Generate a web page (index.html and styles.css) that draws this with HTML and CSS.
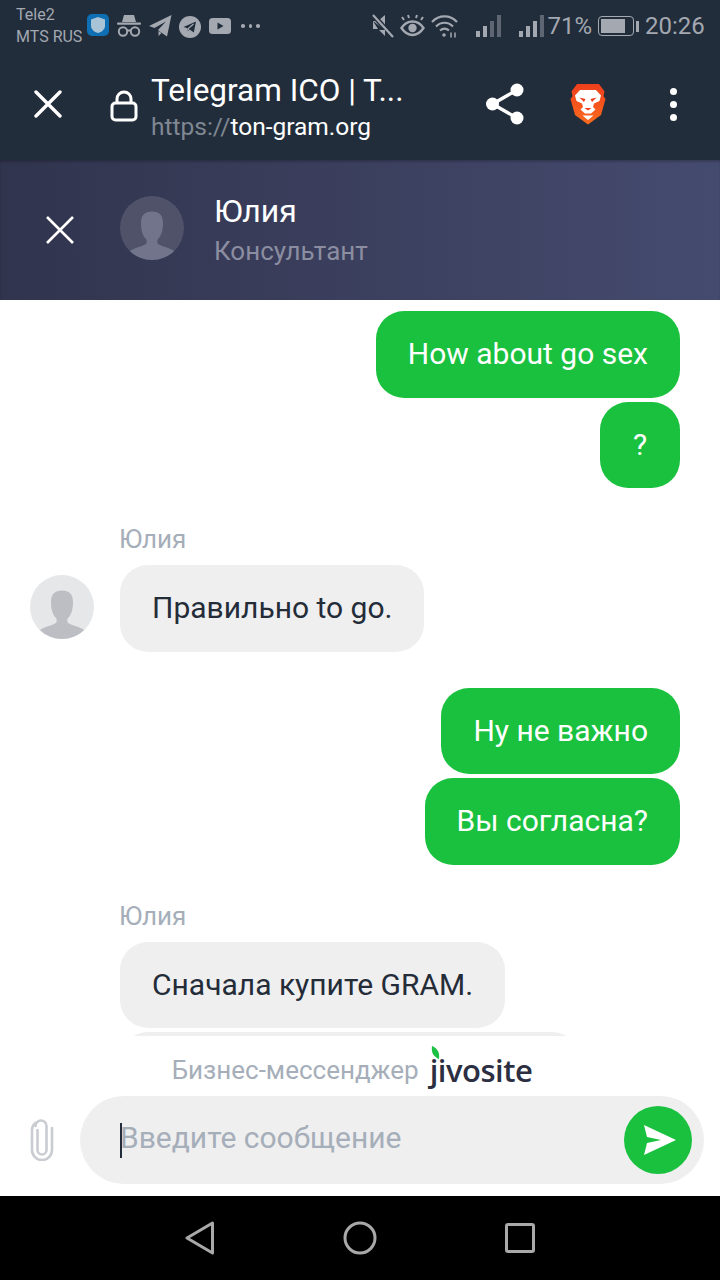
FILE: index.html
```html
<!DOCTYPE html>
<html lang="en">
<head>
  <meta charset="UTF-8">
  <title>Telegram ICO chat</title>
  <link rel="stylesheet" href="styles.css">
</head>
<body>
  <div class="phone">
    <!-- Android status bar -->
    <div class="status-bar">
      <div class="carriers"><span>Tele2</span><span>MTS RUS</span></div>
      <svg class="st-shield" width="22" height="23" viewBox="0 0 22 23"><rect width="22" height="22" y="1" rx="5" fill="#0f6fb4"/><path d="M11 4l7 2.400v6c0 4-3 6.400-7 7.600-4-1.200-7-3.600-7-7.600v-6z" fill="#a9c4d6"/></svg>
      <svg class="st-spy" width="24" height="24" viewBox="0 0 24 24" fill="#a3a8b1"><path d="M7 1h10l2 7H5z"/><rect y="8.500" width="24" height="2.200" rx="1"/><g fill="none" stroke="#a3a8b1" stroke-width="2"><circle cx="6" cy="17.500" r="4.200"/><circle cx="18" cy="17.500" r="4.200"/><path d="M10 16.500h4"/></g></svg>
      <svg class="st-plane" width="23" height="22" viewBox="0 0 23 22" fill="#a3a8b1"><path d="M22.500 0L18 21.500 11.500 17 9 15l8-8.500L5.500 13 0 11z"/><path d="M9.500 16l3 2-3 3z"/></svg>
      <svg class="st-tg" width="22" height="22" viewBox="0 0 22 22"><circle cx="11" cy="11" r="11" fill="#a3a8b1"/><path d="M17 5.500L14.800 16.500 10.700 13.500 9 15.500 8.500 12.300 4.500 11z" fill="#222d3b"/><path d="M14.500 8l-5.200 4.500.3 2" fill="none" stroke="#a3a8b1" stroke-width="1.200"/></svg>
      <svg class="st-yt" width="22" height="16" viewBox="0 0 22 16"><rect width="22" height="16" rx="3.500" fill="#a3a8b1"/><path d="M8.500 4.500L14.500 8l-6 3.500z" fill="#222d3b"/></svg>
      <span class="st-more"><i></i><i></i><i></i></span>

      <svg class="st-mute" width="23" height="24" viewBox="0 0 23 24" fill="#a3a8b1"><path d="M1 7h5l7-6v15z M1 7v8h5z"/><path d="M1 1l20 22" stroke="#222d3b" stroke-width="5"/><path d="M1 1l20 22" stroke="#a3a8b1" stroke-width="2.200"/><path d="M7 16l6 6v-6z"/></svg>
      <svg class="st-eye" width="25" height="24" viewBox="0 0 25 24"><path d="M1.500 14c3-4.500 6.500-6.500 11-6.500s8 2 11 6.500c-3 4.500-6.500 7-11 7s-8-2.500-11-7z" fill="none" stroke="#a3a8b1" stroke-width="2.400"/><circle cx="12.500" cy="14" r="4.200" fill="#a3a8b1"/><path d="M4 6L2 3M9 4L8 1M16 4l1-3M21 6l2-3" stroke="#a3a8b1" stroke-width="2"/></svg>
      <svg class="st-wifi" width="27" height="24" viewBox="0 0 27 24" fill="none" stroke="#a3a8b1" stroke-width="2.200"><path d="M1 8c7-7.500 18-7.500 25 0"/><path d="M5 12.500c5-5 12-5 17 0"/><path d="M9 16.500c3-2.500 6-2.500 9 0"/><circle cx="13" cy="21" r="1.800" fill="#a3a8b1" stroke="none"/><path d="M20 18.500v5M24 18.500v5" stroke-width="1.500"/></svg>
      <span class="signal sig-a"><i class="on h1"></i><i class="on h2"></i><i class="h3"></i><i class="h4"></i></span>
      <span class="signal sig-b"><i class="on h1"></i><i class="on h2"></i><i class="on h3"></i><i class="h4"></i></span>
      <span class="st-pct">71%</span>
      <span class="battery"><span class="battery-fill"></span></span><span class="battery-cap"></span>
      <span class="st-time">20:26</span>
    </div>

    <!-- Browser custom tab toolbar -->
    <div class="toolbar">
      <svg class="tb-close" width="28" height="28" viewBox="0 0 28 28"><path d="M2 2l24 24M26 2L2 26" stroke="#fff" stroke-width="3.400" stroke-linecap="round"/></svg>
      <svg class="tb-lock" width="28" height="32" viewBox="0 0 28 32" fill="none" stroke="#fff" stroke-width="3"><rect x="2" y="13" width="24" height="17" rx="3.500"/><path d="M7 13V9a7 7 0 0 1 14 0v4"/></svg>
      <div class="tb-title">
        <div class="tb-name">Telegram ICO | T...</div>
        <div class="tb-url"><span class="tb-scheme">https://</span>ton-gram.org</div>
      </div>
      <svg class="tb-share" width="38" height="42" viewBox="0 0 38 42" fill="#fff"><circle cx="31" cy="7" r="6.500"/><circle cx="6.500" cy="21" r="6.500"/><circle cx="31" cy="35" r="6.500"/><path d="M31 7L6.500 21 31 35" fill="none" stroke="#fff" stroke-width="3.400"/></svg>
      <svg class="tb-brave" width="36" height="42" viewBox="0 0 36 42">
        <defs><linearGradient id="braveFill" x1="0" y1="0" x2="0" y2="1"><stop offset="0" stop-color="#ee3f1c"/><stop offset="1" stop-color="#fb6b1e"/></linearGradient></defs>
        <path d="M7 1H29L34.500 8.500 33.500 13 35.500 16 31 32 18 41.500 5 32 .5 16 2.500 13 1.500 8.500z" fill="url(#braveFill)"/>
        <path d="M10 7H26L31 12.500 29.500 18 24 20.500 23 24 25.500 26.500 21 30.500H15L10.500 26.500 13 24 12 20.500 6.500 18 5 12.500z" fill="#fff"/>
        <path d="M9.500 14.500l6 1.500-1.500 3zM26.500 14.500l-6 1.500 1.500 3zM14.500 25h7l-3.500 2.500z" fill="#ee3f1c"/>
        <path d="M12.500 32.500h11L18 37z" fill="#fff"/>
      </svg>
      <span class="tb-menu"><i></i><i></i><i></i></span>
    </div>

    <!-- Chat widget header -->
    <div class="chat-header">
      <svg class="ch-close" width="28" height="28" viewBox="0 0 28 28"><path d="M1 1l26 26M27 1L1 27" stroke="#fff" stroke-width="2.600"/></svg>
      <svg class="avatar" width="64" height="64" viewBox="0 0 64 64"><circle cx="32" cy="32" r="32" fill="#4f5269"/><path d="M10 55.200C13 52 21 51 26 48C27 46 27 44 26 43C22 39 21 33 21 27C21 19 25 15.500 32 15.500C39 15.500 43 19 43 27C43 33 42 39 38 43C37 44 37 46 38 48C43 51 51 52 54 55.200A32 32 0 0 1 10 55.200z" fill="#71748a"/></svg>
      <div class="ch-info">
        <div class="ch-name">Юлия</div>
        <div class="ch-role">Консультант</div>
      </div>
    </div>

    <!-- Messages -->
    <div class="messages">
      <div class="group out first">
        <div class="bubble">How about go sex</div>
        <div class="bubble">?</div>
      </div>
      <div class="group in">
        <div class="sender">Юлия</div>
        <div class="in-row">
          <svg class="avatar" width="64" height="64" viewBox="0 0 64 64"><circle cx="32" cy="32" r="32" fill="#e6e7e9"/><path d="M10 55.200C13 52 21 51 26 48C27 46 27 44 26 43C22 39 21 33 21 27C21 19 25 15.500 32 15.500C39 15.500 43 19 43 27C43 33 42 39 38 43C37 44 37 46 38 48C43 51 51 52 54 55.200A32 32 0 0 1 10 55.200z" fill="#bcbec3"/></svg>
          <div class="bubble">Правильно to go.</div>
        </div>
      </div>
      <div class="group out">
        <div class="bubble">Ну не важно</div>
        <div class="bubble">Вы согласна?</div>
      </div>
      <div class="group in">
        <div class="sender">Юлия</div>
        <div class="in-row no-avatar">
          <div class="bubble">Сначала купите GRAM.</div>
        </div>
        <div class="in-row no-avatar">
          <div class="bubble bubble-next"></div>
        </div>
      </div>
    </div>

    <!-- Branding and input -->
    <div class="brand">
      <span class="brand-text">Бизнес-мессенджер</span>
      <span class="brand-logo">
        <svg class="brand-leaf" width="9" height="13" viewBox="0 0 9 13"><path d="M1 0c5 2 8 6 7 13C3 11 0 7 1 0z" fill="#1bc143"/></svg>
        <span class="brand-name">jivosite</span>
      </span>
    </div>
    <div class="composer">
      <svg class="attach" width="24" height="42" viewBox="0 0 24 42" fill="none" stroke="#c9ccd1" stroke-width="2.600" stroke-linecap="round"><path d="M7.500 11v20a4.500 4.500 0 0 0 9 0V7a5.500 5.500 0 0 0-11 0v0"/><path d="M5.500 4C3 6 2 8 2 11v20a10 10 0 0 0 20 0V9"/></svg>
      <div class="input">
        <span class="caret"></span>
        <span class="placeholder">Введите сообщение</span>
        <span class="send">
          <svg width="34" height="32" viewBox="0 0 34 32"><path d="M1 1l32 15L1 31l3-12 14-3-14-3z" fill="#fff"/></svg>
        </span>
      </div>
    </div>

    <!-- Android nav bar -->
    <div class="nav-bar">
      <svg width="30" height="34" viewBox="0 0 30 34"><path d="M27.500 2v30L2 17z" fill="none" stroke="#a9a9a9" stroke-width="3" stroke-linejoin="round"/></svg>
      <svg width="34" height="34" viewBox="0 0 34 34"><circle cx="17" cy="17" r="15" fill="none" stroke="#a9a9a9" stroke-width="3"/></svg>
      <svg width="30" height="30" viewBox="0 0 30 30"><rect x="1.500" y="1.500" width="27" height="27" rx="1.500" fill="none" stroke="#a9a9a9" stroke-width="3"/></svg>
    </div>
  </div>
</body>
</html>
```

FILE: styles.css
```css
/* Page frame */
* {
  box-sizing: border-box;
}
body {
  margin: 0;
  background: #fff;
  font-family: Roboto, "Noto Sans", sans-serif;
}
.phone {
  width: 720px;
  height: 1280px;
  display: flex;
  flex-direction: column;
  overflow: hidden;
}
svg {
  display: block;
  flex: none;
}

/* Status bar */
.status-bar {
  height: 50px;
  background: #222d3b;
  color: #a3a8b1;
  display: flex;
  align-items: center;
  padding: 2px 0 0 16px;
}
.carriers {
  width: 71px;
  display: flex;
  flex-direction: column;
  font-size: 16px;
  line-height: 22px;
  white-space: nowrap;
}
.st-shield { margin-top: -3px; }
.st-spy { margin-left: 8px; }
.st-plane { margin-left: 8px; }
.st-tg { margin-left: 7px; margin-top: 1px; }
.st-yt { margin-left: 8px; }
.st-more {
  margin-left: 10px;
  display: flex;
  gap: 4px;
}
.st-more i {
  width: 3.500px;
  height: 3.500px;
  border-radius: 50%;
  background: #a3a8b1;
}
.st-mute { margin-left: 112px; }
.st-eye { margin-left: 5px; }
.st-wifi { margin-left: 6px; }
.signal {
  height: 22px;
  display: flex;
  align-items: flex-end;
  gap: 3px;
}
.signal i {
  width: 4px;
  background: #5d6672;
}
.signal i.on { background: #a3a8b1; }
.signal .h1 { height: 6px; }
.signal .h2 { height: 11px; }
.signal .h3 { height: 16px; }
.signal .h4 { height: 22px; }
.sig-a { margin-left: 18px; }
.sig-b { margin-left: 18px; }
.st-pct {
  margin-left: 4px;
  font-size: 24px;
}
.battery {
  margin-left: 6px;
  width: 36px;
  height: 20px;
  border: 1.500px solid #a3a8b1;
  border-radius: 4px;
  padding: 2px;
}
.battery-fill {
  display: block;
  width: 24px;
  height: 100%;
  background: #a3a8b1;
}
.battery-cap {
  margin-left: 2px;
  width: 3px;
  height: 11px;
  background: #a3a8b1;
}
.st-time {
  margin-left: 6px;
  font-size: 24px;
}

/* Toolbar */
.toolbar {
  height: 110px;
  background: #222d3b;
  display: flex;
  align-items: center;
  color: #fff;
  padding-bottom: 2px;
}
.tb-close { margin-left: 34px; }
.tb-lock { margin-left: 48px; margin-top: 4px; }
.tb-title {
  margin-left: 13px;
  width: 335px;
  padding-top: 5px;
  display: flex;
  flex-direction: column;
  gap: 4px;
  white-space: nowrap;
}
.tb-name {
  font-size: 31.500px;
  line-height: 36px;
}
.tb-url {
  font-size: 24.500px;
  line-height: 28px;
}
.tb-scheme { color: #7f8792; }
.tb-brave { margin-left: 46px; }
.tb-menu {
  margin-left: 64px;
  display: flex;
  flex-direction: column;
  gap: 6px;
}
.tb-menu i {
  width: 7px;
  height: 7px;
  border-radius: 50%;
  background: #fff;
}

/* Chat header */
.chat-header {
  height: 140px;
  background: linear-gradient(90deg, #31344d, #454b6f);
  box-shadow: inset 0 2px 2px rgba(0,0,0,0.2);
  display: flex;
  align-items: center;
}
.ch-close { margin-left: 46px; }
.chat-header .avatar { margin-left: 46px; margin-top: -4px; }
.ch-info {
  margin-left: 30px;
  display: flex;
  flex-direction: column;
  gap: 8px;
}
.ch-name {
  font-size: 32px;
  line-height: 34px;
  color: #fff;
}
.ch-role {
  font-size: 26px;
  line-height: 30px;
  color: #8b8da1;
}

/* Messages */
.messages {
  height: 736px;
  overflow: hidden;
  background: #fff;
  padding: 11px 40px 0 30px;
  display: flex;
  flex-direction: column;
}
.group {
  display: flex;
  flex-direction: column;
  flex: none;
}
.bubble {
  font-size: 30px;
  line-height: 34.500px;
  min-width: 80px;
  padding: 26px 32px;
  border-radius: 28px;
  text-align: center;
  white-space: nowrap;
}
.bubble-next {
  width: 460px;
  height: 86px;
}
.out {
  align-items: flex-end;
  gap: 4px;
  margin-top: 36px;
}
.out.first { margin-top: 0; }
.out .bubble {
  background: #19c13f;
  color: #fff;
}
.in {
  margin-top: 39px;
  gap: 4px;
}
.sender {
  margin-left: 89px;
  font-size: 26px;
  line-height: 24px;
  margin-bottom: 10px;
  color: #a5aeb9;
}
.in-row {
  display: flex;
  align-items: center;
  gap: 26px;
}
.in-row .avatar { margin-top: -2px; }
.no-avatar { padding-left: 90px; }
.in .bubble {
  background: #efeff0;
  color: #242c38;
}

/* Branding */
.brand {
  height: 60px;
  background: #fff;
  display: flex;
  align-items: center;
  justify-content: center;
  gap: 11px;
  padding: 8px 16px 0 0;
}
.brand-text {
  font-size: 26px;
  color: #a5aeb9;
}
.brand-logo {
  position: relative;
}
.brand-leaf {
  position: absolute;
  left: 1px;
  top: -3px;
}
.brand-name {
  font-family: "Open Sans", sans-serif;
  font-weight: 600;
  font-size: 31px;
  letter-spacing: -0.5px;
  color: #2c2f42;
}

/* Composer */
.composer {
  height: 100px;
  background: #fff;
  display: flex;
  align-items: flex-start;
  padding: 0 16px 0 30px;
}
.attach { margin-top: 23px; }
.input {
  margin-left: 26px;
  flex: 1;
  height: 88px;
  border-radius: 44px;
  background: #efeff0;
  display: flex;
  align-items: center;
  padding: 0 12px 0 40px;
}
.caret {
  width: 2px;
  height: 35px;
  background: #222d3b;
  flex: none;
}
.placeholder {
  margin-left: -2px;
  margin-top: -6px;
  flex: 1;
  font-size: 30px;
  color: #a5aeb9;
}
.send {
  width: 68px;
  height: 68px;
  border-radius: 50%;
  background: #19c13f;
  display: flex;
  align-items: center;
  justify-content: center;
  padding-left: 4px;
}

/* Nav bar */
.nav-bar {
  flex: 1;
  background: #000;
  display: flex;
  align-items: center;
  justify-content: center;
  gap: 128px;
}
```
